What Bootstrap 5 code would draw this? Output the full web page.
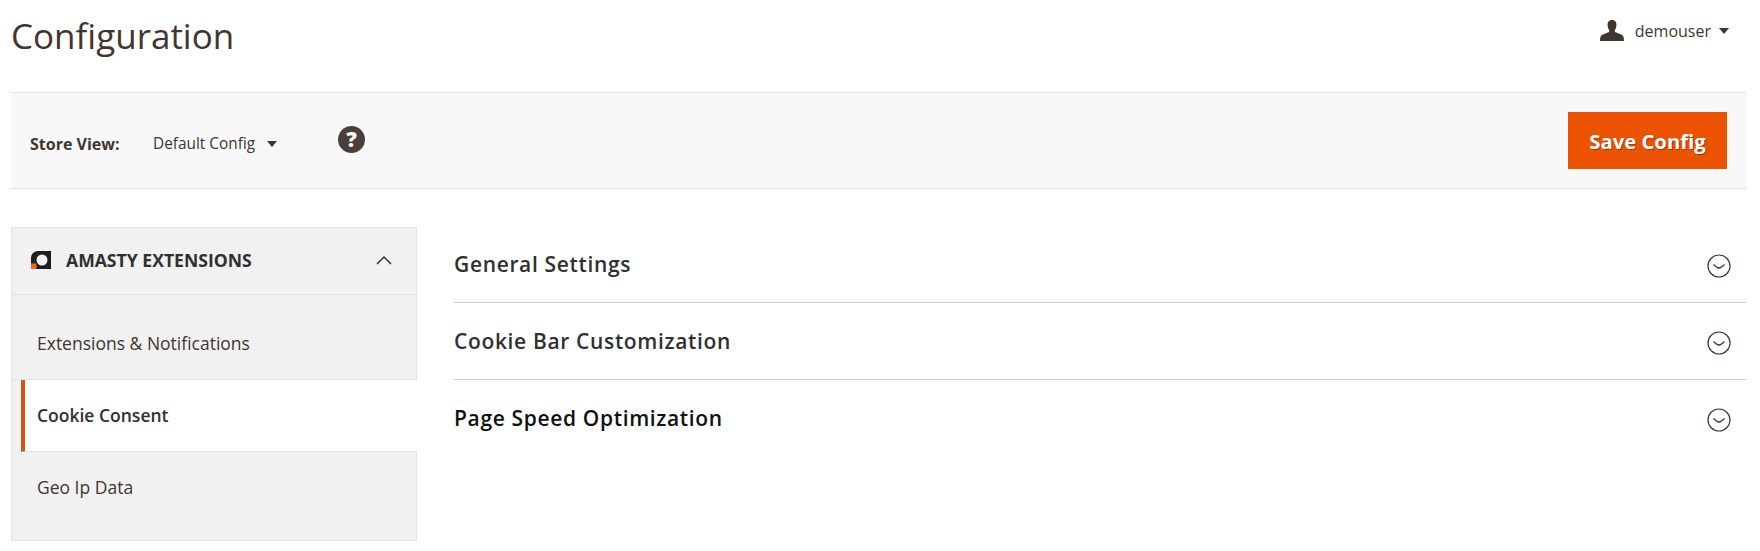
<!DOCTYPE html>
<html lang="en">
<head>
<meta charset="utf-8">
<title>Configuration</title>
<link href="https://cdn.jsdelivr.net/npm/bootstrap@5.3.0/dist/css/bootstrap.min.css" rel="stylesheet">
<style>
html,body{height:551px;overflow:hidden;background:#fff}
body{font-family:"Open Sans",sans-serif;color:#41362f;font-size:16px}
.page-shell{padding:0 14px 0 11px}
.top-head{height:92px}
.page-title{font-size:35px;font-weight:380;line-height:46px;margin:13px 0 0;color:#41362f}
.user-menu{margin:19px 17px 0 0;font-size:16px;line-height:24px;color:#41362f}
.user-icon{margin-right:6px}
.caret-down{display:inline-block;border-style:solid;border-width:6px 5px 0;border-color:#41362f transparent transparent}
.store-bar{height:97px;background:#f8f8f8;border-top:1px solid #e3e3e3;border-bottom:1px solid #e3e3e3;padding:0 19px}
.store-label{font-size:16px;font-weight:700;width:123px;padding-top:7px}
.store-value{font-size:15.400px;padding-top:7px}
.caret-gap{margin:7px 0 0 12px}
.help-dot{width:27px;height:27px;margin:-3px 0 0 61px;background:#4a3f39;color:#fff;font-size:21px;font-weight:800;line-height:27px}
.save-btn{width:159px;height:57px;padding:0;background:#eb5202;border:0;border-radius:0;color:#fff;font-size:20.300px;font-weight:700;line-height:59px;text-shadow:1px 1px 1px rgba(0,0,0,.3)}
.save-btn:hover{background:#eb5202;color:#fff}
.main-wrap{margin-top:38px;gap:37px}
.side-panel{width:406px;flex:none;height:314px;background:#f1f1f1;border:1px solid #e3e3e3}
.side-head{height:67px;padding:0 24px 2px 19px;border-bottom:1px solid #e3e3e3;font-size:17.600px;font-weight:700;color:#303030}
.side-head svg.brand{margin-right:15px}
.side-link{display:flex;align-items:center;padding-left:25px;font-size:17.500px;color:#41362f;text-decoration:none}
.link-plain{height:85px;padding-top:12px;border-bottom:1px solid #e3e3e3}
.link-last{height:89px;padding-bottom:19px}
.link-active{height:72px;margin-left:9px;margin-right:-1px;padding-left:12px;background:#fff;border-left:4px solid #d1541c;border-bottom:1px solid #e3e3e3;font-weight:600;color:#303030;position:relative}
.section-list{flex:1;margin-top:-1px}
.section-row{height:77px;display:flex;align-items:center;justify-content:space-between;border-bottom:1px solid #ccc;padding:2px 0 0 0;font-size:21px;font-weight:550;letter-spacing:.65px;color:#303030}
.section-row.last-row{border-bottom:0;color:#111;height:76px}
.section-row svg{margin-right:15px;flex:none;margin-top:1px}
</style>
</head>
<body>
<div class="page-shell">
  <header class="top-head d-flex justify-content-between align-items-start">
    <h1 class="page-title">Configuration</h1>
    <div class="user-menu d-flex align-items-center">
      <svg width="26" height="24" viewBox="0 0 26 24" class="user-icon"><path fill="#41362f" d="M13 1c3 0 4.600 2.200 4.400 5.200-.1 1.700-.6 3.600-1.500 5-.4.700-.3 1.600.5 2 2.700 1.200 6.300 1.900 7.700 3.800.7 1 .9 3 .9 5H1c0-2 .2-4 .9-5 1.400-1.900 5-2.600 7.700-3.800.8-.4.900-1.300.5-2-.9-1.400-1.400-3.300-1.500-5C8.400 3.200 10 1 13 1z"/></svg>
      <span class="ms-1">demouser</span>
      <span class="caret-down ms-2"></span>
    </div>
  </header>

  <div class="store-bar d-flex align-items-center justify-content-between">
    <div class="d-flex align-items-center">
      <span class="store-label">Store View:</span>
      <span class="store-value">Default Config</span>
      <span class="caret-down caret-gap"></span>
      <span class="help-dot rounded-circle d-flex align-items-center justify-content-center">?</span>
    </div>
    <button type="button" class="btn save-btn">Save Config</button>
  </div>

  <div class="main-wrap d-flex">
    <aside class="side-panel">
      <div class="side-head d-flex align-items-center">
        <svg class="brand" width="20" height="18" viewBox="0 0 20 18"><path fill="#1f1f1f" fill-rule="evenodd" d="M7 0h13v18H6a6 6 0 0 1-6-6V7a7 7 0 0 1 7-7zm4 3.500a5.500 5.500 0 1 0 0 11 5.500 5.500 0 0 0 0-11z"/><rect x="0" y="12.500" width="5.500" height="5.500" fill="#f26322"/></svg>
        <span class="flex-grow-1">AMASTY EXTENSIONS</span>
        <svg width="16" height="10" viewBox="0 0 16 10"><path d="M1 9l7-7 7 7" fill="none" stroke="#303030" stroke-width="1.500"/></svg>
      </div>
      <a class="side-link link-plain" href="#">Extensions &amp; Notifications</a>
      <a class="side-link link-active" href="#">Cookie Consent</a>
      <a class="side-link link-last" href="#">Geo Ip Data</a>
    </aside>
    <main class="section-list">
      <div class="section-row"><span>General Settings</span><svg width="24" height="24" viewBox="0 0 24 24"><circle cx="12" cy="12" r="11" fill="none" stroke="#41362f" stroke-width="1.200"/><path d="M6.500 10.500c2 2 3.500 3.500 5.500 3.500s3.500-1.500 5.500-3.500" fill="none" stroke="#41362f" stroke-width="1.300"/></svg></div>
      <div class="section-row"><span>Cookie Bar Customization</span><svg width="24" height="24" viewBox="0 0 24 24"><circle cx="12" cy="12" r="11" fill="none" stroke="#41362f" stroke-width="1.200"/><path d="M6.500 10.500c2 2 3.500 3.500 5.500 3.500s3.500-1.500 5.500-3.500" fill="none" stroke="#41362f" stroke-width="1.300"/></svg></div>
      <div class="section-row last-row"><span>Page Speed Optimization</span><svg width="24" height="24" viewBox="0 0 24 24"><circle cx="12" cy="12" r="11" fill="none" stroke="#41362f" stroke-width="1.200"/><path d="M6.500 10.500c2 2 3.500 3.500 5.500 3.500s3.500-1.500 5.500-3.500" fill="none" stroke="#41362f" stroke-width="1.300"/></svg></div>
    </main>
  </div>
</div>
<script src="https://cdn.jsdelivr.net/npm/bootstrap@5.3.0/dist/js/bootstrap.bundle.min.js"></script>
</body>
</html>
